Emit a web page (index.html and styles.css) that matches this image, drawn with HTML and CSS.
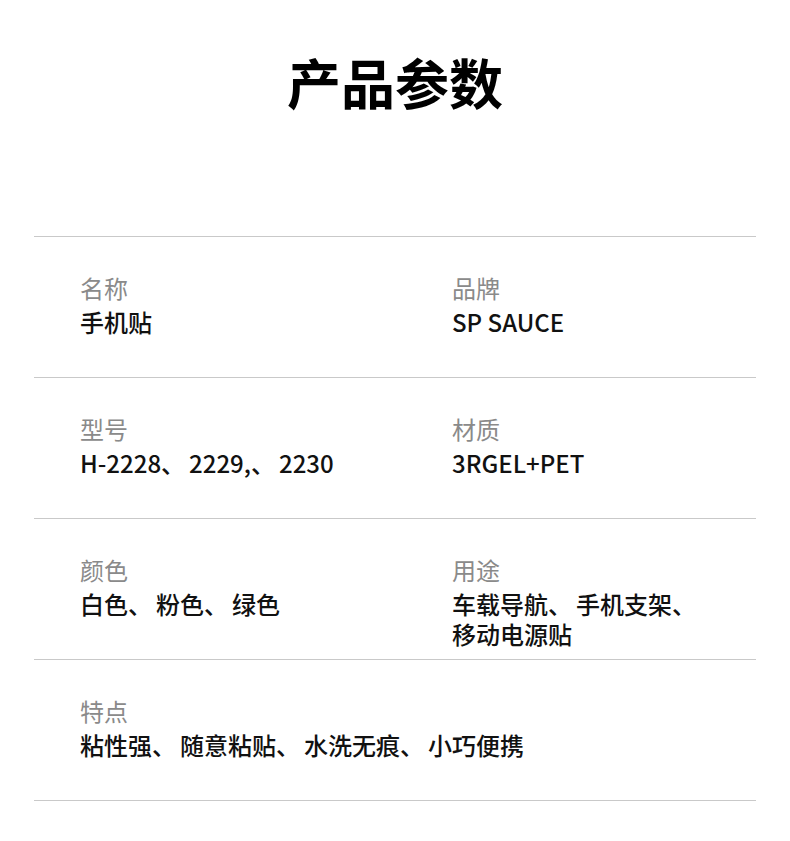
FILE: index.html
```html
<!DOCTYPE html>
<html lang="zh-CN">
  <head>
    <meta charset="UTF-8" />
    <meta name="viewport" content="width=device-width, initial-scale=1.0" />
    <title>产品参数</title>
    <link rel="stylesheet" href="styles.css">
  </head>
  <body>
    <div class="params">
      <h1 class="params-title">产品参数</h1>

      <div class="params-table">
        <div class="params-row">
          <div class="param">
            <p class="param-label">名称</p>
            <p class="param-value">手机贴</p>
          </div>
          <div class="param">
            <p class="param-label">品牌</p>
            <p class="param-value">SP SAUCE</p>
          </div>
        </div>

        <div class="params-row">
          <div class="param">
            <p class="param-label">型号</p>
            <p class="param-value">H-2228<span class="sep">、</span>2229,<span class="sep">、</span>2230</p>
          </div>
          <div class="param">
            <p class="param-label">材质</p>
            <p class="param-value">3RGEL+PET</p>
          </div>
        </div>

        <div class="params-row">
          <div class="param">
            <p class="param-label">颜色</p>
            <p class="param-value">白色<span class="sep">、</span>粉色<span class="sep">、</span>绿色</p>
          </div>
          <div class="param">
            <p class="param-label">用途</p>
            <p class="param-value">车载导航<span class="sep">、</span>手机支架<span class="sep">、</span><br>移动电源贴</p>
          </div>
        </div>

        <div class="params-row">
          <div class="param param-wide">
            <p class="param-label">特点</p>
            <p class="param-value">粘性强<span class="sep">、</span>随意粘贴<span class="sep">、</span>水洗无痕<span class="sep">、</span>小巧便携</p>
          </div>
        </div>
      </div>
    </div>
  </body>
</html>
```

FILE: styles.css
```css
body {
  margin: 0;
  font-family: "Noto Sans CJK SC", "Noto Sans", sans-serif;
  background-color: #fff;
  color: #111;
}

.params {
  padding: 48px 34px 0;
}

.params-title {
  margin: 0;
  text-align: center;
  font-size: 54px;
  line-height: 68px;
  font-weight: 700;
  color: #000;
}

.params-table {
  margin-top: 120px;
  border-top: 1px solid #c9c9c9;
}

.params-row {
  display: grid;
  grid-template-columns: 372px 1fr;
  height: 141px;
  box-sizing: border-box;
  padding: 36px 0 0 46px;
  border-bottom: 1px solid #c9c9c9;
}

.param-wide {
  grid-column: 1 / -1;
}

.param p {
  margin: 0;
}

.param-label {
  font-size: 24px;
  line-height: 30px;
  color: #8a8a8a;
  font-weight: 400;
}

.param-value {
  margin-top: 4px !important;
  font-size: 24px;
  line-height: 30px;
  font-weight: 500;
  color: #111;
}

.sep {
  display: inline-block;
  margin-right: 4px;
}
```
